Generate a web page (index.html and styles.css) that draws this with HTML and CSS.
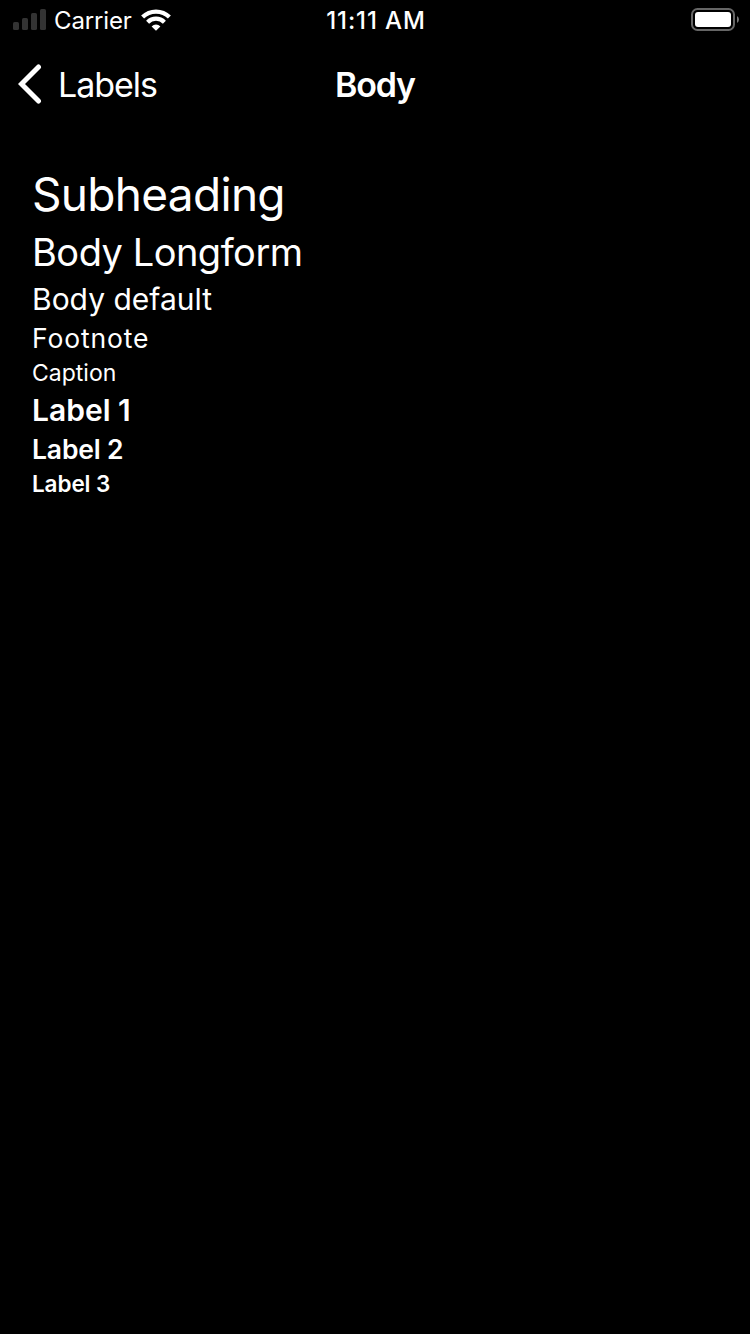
FILE: index.html
```html
<!DOCTYPE html>
<html lang="en">
<head>
<meta charset="utf-8">
<title>Body</title>
<link rel="stylesheet" href="styles.css">
</head>
<body>
<header class="status">
  <div class="status-left">
    <svg class="signal" width="34" height="22" viewBox="0 0 34 22"><rect x="0" y="13" width="6" height="8" rx="1.6"/><rect x="9" y="9" width="6" height="12" rx="1.6"/><rect x="18" y="4" width="6" height="17" rx="1.6"/><rect x="27" y="0" width="6" height="21" rx="1.6"/></svg>
    <span class="carrier">Carrier</span>
    <svg class="wifi" width="30" height="22" viewBox="0 0 30 22"><path d="M1.6 8.1A19 19 0 0 1 28.4 8.1M6.6 13.2A11.8 11.8 0 0 1 23.4 13.2" fill="none" stroke="#fff" stroke-width="4.2"/><path d="M15 21.8L10.6 17.4A6.2 6.2 0 0 1 19.4 17.4Z" fill="#fff"/></svg>
  </div>
  <span class="time">11:11 AM</span>
  <div class="status-right">
    <svg width="48" height="23" viewBox="0 0 48 23"><rect x="1" y="1" width="42" height="21" rx="5.5" fill="none" stroke="#666" stroke-width="2"/><rect x="4" y="4" width="36" height="15" rx="3" fill="#fff"/><path d="M46 8Q48 9.3 48 11.5T46 15Z" fill="#777"/></svg>
  </div>
</header>
<nav class="nav">
  <div class="back">
    <svg width="24" height="40" viewBox="0 0 24 40"><path d="M20.5 3L3.5 20L20.5 37" fill="none" stroke="#fff" stroke-width="5" stroke-linecap="round" stroke-linejoin="miter"/></svg>
    <span class="back-label">Labels</span>
  </div>
  <span class="title">Body</span>
  <div></div>
</nav>
<main class="list">
  <div class="subheading"><span>Subheading</span></div>
  <div class="longform"><span>Body Longform</span></div>
  <div class="default"><span>Body default</span></div>
  <div class="footnote"><span>Footnote</span></div>
  <div class="caption"><span>Caption</span></div>
  <div class="label1"><span>Label 1</span></div>
  <div class="label2"><span>Label 2</span></div>
  <div class="label3"><span>Label 3</span></div>
</main>
</body>
</html>
```
FILE: styles.css
```css
body { margin: 0; min-height: 1334px; background: #000; color: #fff; font-family: Inter, "Liberation Sans", sans-serif; white-space: nowrap; }
svg { display: block; flex: none; }
.status { display: grid; grid-template-columns: 1fr auto 1fr; height: 40px; padding: 0 11px 0 13px; align-items: center; }
.status-left { display: flex; align-items: center; }
.signal { fill: #333; }
.carrier { margin-left: 7px; width: 80px; padding-top: 2px; font-size: 24px; line-height: 38px; letter-spacing: -0.15px; }
.wifi { margin-left: 7px; }
.time { padding-top: 2px; font-size: 24px; font-weight: 500; line-height: 38px; letter-spacing: 0.9px; }
.status-right { display: flex; justify-content: flex-end; padding-bottom: 1px; }
.nav { display: grid; grid-template-columns: 1fr auto 1fr; height: 88px; padding: 0 18px; align-items: center; }
.back { display: flex; align-items: center; gap: 16px; }
.back-label { padding-top: 2px; font-size: 34px; line-height: 86px; letter-spacing: -1.05px; }
.title { padding-top: 2px; font-size: 34px; font-weight: 600; line-height: 86px; letter-spacing: -1.2px; }
.list { padding: 36px 32px; }
.subheading { font-size: 46px; line-height: 60px; letter-spacing: -0.7px; }
.longform { font-size: 38px; line-height: 56px; letter-spacing: -0.5px; }
.default { font-size: 30px; line-height: 38px; letter-spacing: 0; }
.footnote { font-size: 26.5px; line-height: 40px; letter-spacing: 0.85px; }
.caption { font-size: 23px; line-height: 30px; letter-spacing: 0; }
.label1 { font-size: 30px; line-height: 44px; font-weight: 600; letter-spacing: 0; }
.label2 { font-size: 26.5px; line-height: 35px; font-weight: 600; letter-spacing: -0.15px; }
.label3 { font-size: 22.5px; line-height: 34px; font-weight: 600; letter-spacing: -0.1px; }
```
